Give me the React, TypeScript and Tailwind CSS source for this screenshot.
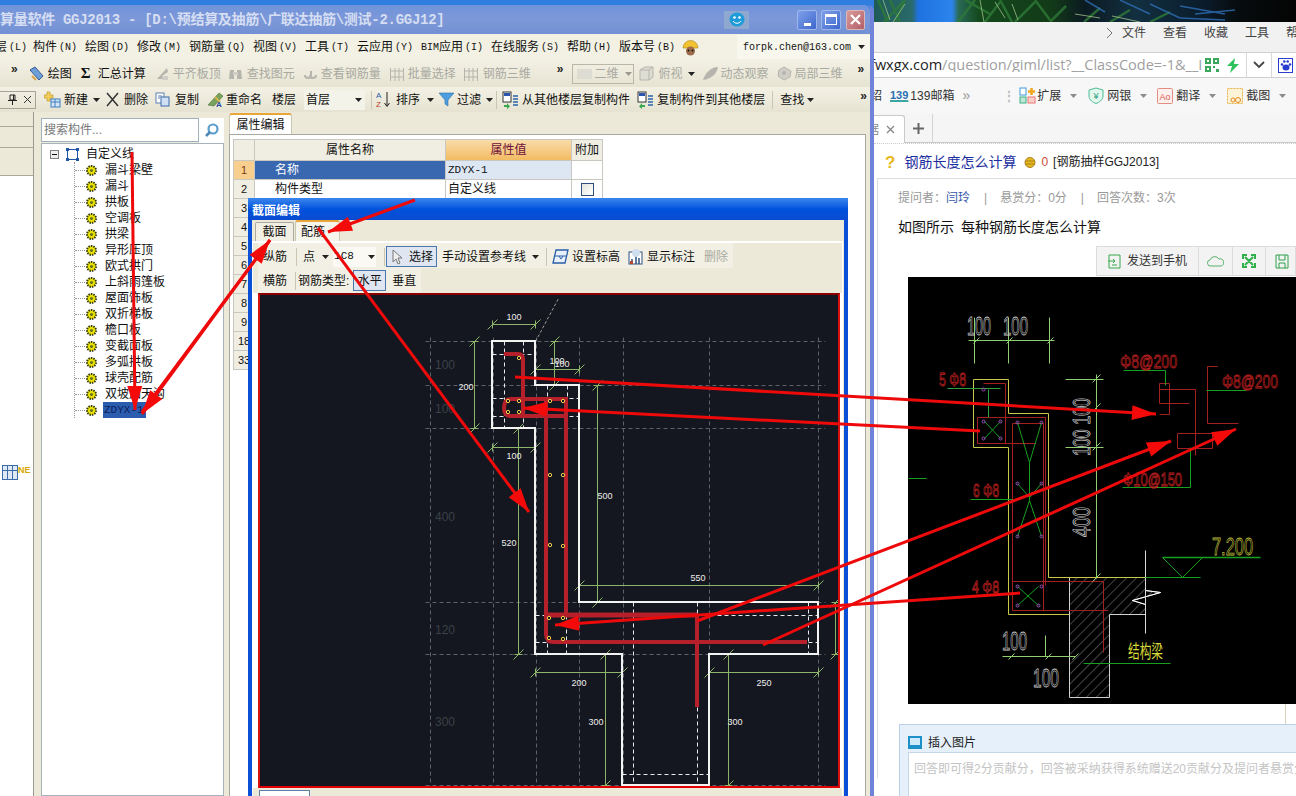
import React from "react";

const MONO = "font-['Liberation_Mono','Noto_Sans_CJK_SC',monospace]";

function Caret({ className = "" }: { className?: string }) {
  return (
    <svg width="7" height="4" viewBox="0 0 7 4" className={"shrink-0 " + className}>
      <path d="M0 0h7L3.5 4z" fill="#222" />
    </svg>
  );
}

function More({ className = "" }: { className?: string }) {
  return <span className={"shrink-0 text-[12px] font-bold leading-none text-[#222] " + className}>»</span>;
}

function Sep({ className = "" }: { className?: string }) {
  return <span className={"h-[18px] w-px shrink-0 bg-[#c9c6b4] " + className} />;
}

function Ic({ k }: { k: string }) {
  const grey = "#b5b5ad";
  switch (k) {
    case "draw":
      return (
        <svg width="17" height="17" viewBox="0 0 17 17">
          <path d="M2 5l5-3 8 9-4 4z" fill="#6f9fd8" stroke="#34598f" />
          <path d="M4 11l4 4" stroke="#d9a441" strokeWidth="2" />
        </svg>
      );
    case "sigma":
      return <span className="w-[9px] font-['Liberation_Serif',serif] text-[15px] font-bold leading-none text-[#111]">Σ</span>;
    case "g1":
      return (
        <svg width="15" height="15" viewBox="0 0 15 15">
          <path d="M2 13L12 2l1 4-6 4v3z" fill={grey} />
          <rect x="7" y="10" width="6" height="4" fill="#cfcfc8" />
        </svg>
      );
    case "g2":
      return (
        <svg width="15" height="15" viewBox="0 0 15 15">
          <path d="M2 4h4v9H1zM9 4h4l1 9H9z" fill={grey} />
          <rect x="5" y="6" width="5" height="3" fill="#cfcfc8" />
        </svg>
      );
    case "g3":
      return (
        <svg width="15" height="15" viewBox="0 0 15 15">
          <path d="M2 9a3 3 0 106 0V5M13 9a3 3 0 11-6 0" fill="none" stroke={grey} strokeWidth="2" />
        </svg>
      );
    case "g4":
      return (
        <svg width="16" height="16" viewBox="0 0 16 16" fill="none" stroke={grey}>
          <path d="M1.5 2v13M6 2v13M10 2v13M14.5 2v13M1 5h14M1 11h14" />
        </svg>
      );
    case "g5":
      return (
        <svg width="17" height="17" viewBox="0 0 17 17" fill="#ddddd4" stroke={grey}>
          <path d="M2 5l5-3h8v10l-4 3H2z" />
          <path d="M2 5h9v10M11 5l4-3" fill="none" />
        </svg>
      );
    case "g6":
      return (
        <svg width="17" height="17" viewBox="0 0 17 17">
          <path d="M1 15C3 8 9 2 16 2c-1 7-7 12-15 13z" fill={grey} />
        </svg>
      );
    case "g7":
      return (
        <svg width="17" height="17" viewBox="0 0 17 17">
          <path d="M8 2l7 4-1 6-6 3-6-4 1-6z" fill="#cfcfc8" stroke={grey} />
          <circle cx="8" cy="8" r="2" fill={grey} />
        </svg>
      );
    case "new":
      return (
        <svg width="17" height="17" viewBox="0 0 17 17">
          <path d="M3 1h3v3h3v3H6v3H3V7H0V4h3z" fill="#f3cf5a" stroke="#b98e22" strokeWidth=".6" />
          <rect x="7" y="8" width="9" height="8" fill="#d6e5f5" stroke="#3d7fc0" />
          <path d="M7 11h9M11 8v8" stroke="#3d7fc0" />
        </svg>
      );
    case "del":
      return (
        <svg width="15" height="15" viewBox="0 0 15 15">
          <path d="M2 1l11 13M13 1L2 14" stroke="#333" strokeWidth="1.5" />
        </svg>
      );
    case "copy":
      return (
        <svg width="15" height="15" viewBox="0 0 15 15">
          <rect x="1" y="1" width="8" height="10" fill="#fff" stroke="#5a7fb8" />
          <rect x="6" y="5" width="8" height="9" fill="#cfe0f5" stroke="#3d69a8" />
          <path d="M3 4h4M3 6h2" stroke="#5a7fb8" />
        </svg>
      );
    case "rename":
      return (
        <svg width="19" height="17" viewBox="0 0 19 17">
          <path d="M2 14L13 2l4 3L8 15z" fill="#77a35a" stroke="#4b6e39" strokeWidth=".6" />
          <path d="M9 6l5 5" stroke="#d6b24a" strokeWidth="2" />
          <text x="10" y="16" fontSize="8" fontWeight="700" fill="#224f9c" fontFamily="Liberation Sans">A</text>
        </svg>
      );
    case "sort":
      return (
        <svg width="15" height="17" viewBox="0 0 15 17">
          <text x="0" y="7" fontSize="8" fill="#2d5ea8" fontFamily="Liberation Sans">A</text>
          <text x="0" y="16" fontSize="8" fill="#c0392b" fontFamily="Liberation Sans">Z</text>
          <path d="M11 1v14M8.5 12l2.5 3.5 2.5-3.5" stroke="#222" fill="none" />
        </svg>
      );
    case "filter":
      return (
        <svg width="15" height="15" viewBox="0 0 15 15">
          <path d="M0 1h15L9 8v6l-3-2V8z" fill="#4d9ee0" stroke="#2c6ea8" strokeWidth=".6" />
        </svg>
      );
    case "layerIn":
    case "layerOut":
      return (
        <svg width="17" height="18" viewBox="0 0 17 18">
          <rect x="1" y="1" width="8" height="10" fill="#fff" stroke="#333" />
          <rect x="2" y="2" width="6" height="3" fill="#2a56b0" />
          <path d="M11 5h5M11 8h5M11 11h5M11 14h5" stroke="#5a85b8" strokeWidth="2" />
          <path d={k === "layerIn" ? "M2 14h3v-2l3 3.5L5 18v-2H2z" : "M8 14H5v-2l-3 3.5L5 18v-2h3z"} fill="#3aa94e" />
        </svg>
      );
    case "level":
      return (
        <svg width="17" height="15" viewBox="0 0 17 15">
          <path d="M4 1h12l-3 13H1z" fill="#e8f0fa" stroke="#2a5ea8" strokeWidth="1.3" />
          <path d="M3 7h11M7 7l2 3 2-3" stroke="#2a5ea8" fill="none" />
        </svg>
      );
    case "mark":
      return (
        <svg width="15" height="16" viewBox="0 0 15 16">
          <rect x="1" y="3" width="13" height="12" fill="#fff" stroke="#2f4f7f" />
          <path d="M4 15V10M8 15V7M11 15V9" stroke="#2f4f7f" strokeWidth="1.5" />
          <circle cx="8" cy="4" r="4" fill="#cfdff0" />
          <rect x="2" y="12" width="3" height="3" fill="#b5482a" />
        </svg>
      );
    default:
      return null;
  }
}

function Tool({ i, t, off, drop, g = "gap-[3px]", className = "" }: { i: string; t: string; off?: boolean; drop?: boolean; g?: string; className?: string }) {
  return (
    <div className={"flex shrink-0 items-center whitespace-nowrap " + g + " " + (off ? "text-[#a9a9a1] " : "text-[#111] ") + className}>
      <Ic k={i} />
      <span>{t}</span>
      {drop && <Caret className="ml-[2px]" />}
    </div>
  );
}

function Title() {
  return (
    <div className="relative flex h-[29px] shrink-0 items-center rounded-tr-[6px] bg-gradient-to-b from-[#6f93dc] via-[#7d98d8] to-[#7290d4]">
      <span className={MONO + " mt-[2px] whitespace-nowrap text-[14px] font-bold tracking-[-0.28px] text-[#d5def2]"}>
        算量软件 GGJ2013 - [D:\预结算及抽筋\广联达抽筋\测试-2.GGJ12]
      </span>
      <div className="ml-auto mr-[5px] flex items-center">
        <div className="mr-[48px] flex h-[18px] w-[25px] items-center justify-center bg-[#8fa8cf]">
          <svg width="16" height="15" viewBox="0 0 16 15">
            <ellipse cx="8" cy="7.5" rx="7.5" ry="7" fill="#1e9bd8" />
            <circle cx="5.5" cy="5.5" r="1.3" fill="#fff" />
            <circle cx="10.5" cy="5.5" r="1.3" fill="#fff" />
            <path d="M4 9c2 3 6 3 8 0" stroke="#fff" fill="none" />
          </svg>
        </div>
        <div className="flex h-[20px] w-[20px] items-end justify-center rounded-[2px] border border-[#9db6ee] bg-gradient-to-br from-[#7fa1ea] to-[#3f66cc] pb-[3px]">
          <span className="h-[3px] w-[7px] bg-white" />
        </div>
        <div className="ml-[4px] flex h-[20px] w-[20px] items-center justify-center rounded-[2px] border border-[#9db6ee] bg-gradient-to-br from-[#7fa1ea] to-[#3f66cc]">
          <span className="h-[11px] w-[12px] border border-t-[3px] border-white" />
        </div>
        <div className="ml-[5px] flex h-[20px] w-[19px] items-center justify-center rounded-[2px] border border-[#d9b6bc] bg-gradient-to-br from-[#d99b98] to-[#b25e6a]">
          <svg width="11" height="11" viewBox="0 0 11 11">
            <path d="M1 1l9 9M10 1l-9 9" stroke="#fff" strokeWidth="2.2" />
          </svg>
        </div>
      </div>
    </div>
  );
}

function MenuBar() {
  const items: [string, string, string, string][] = [
    ["", "层", "(L)", "-ml-[5px] w-[38px]"],
    ["", "构件", "(N)", "w-[52px]"],
    ["", "绘图", "(D)", "w-[52px]"],
    ["", "修改", "(M)", "w-[52px]"],
    ["", "钢筋量", "(Q)", "w-[64px]"],
    ["", "视图", "(V)", "w-[52px]"],
    ["", "工具", "(T)", "w-[52px]"],
    ["", "云应用", "(Y)", "w-[64px]"],
    ["BIM", "应用", "(I)", "w-[70px]"],
    ["", "在线服务", "(S)", "w-[76px]"],
    ["", "帮助", "(H)", "w-[52px]"],
    ["", "版本号", "(B)", "w-[63px]"],
  ];
  return (
    <div className="flex h-[26px] shrink-0 items-center bg-[#f3f1e4] text-[12px] text-[#111]">
      {items.map(([p, t, l, c]) => (
        <span key={t} className={"flex shrink-0 items-center whitespace-nowrap " + c}>
          {p && <span className={MONO + " text-[10px]"}>{p}</span>}
          <span>{t}</span>
          <span className={MONO + " ml-[2px] text-[10px]"}>{l}</span>
        </span>
      ))}
      <svg width="17" height="17" viewBox="0 0 17 17" className="shrink-0">
        <path d="M1 9a7.5 7.5 0 0115 0z" fill="#f2c230" stroke="#a98416" strokeWidth=".6" />
        <circle cx="8.5" cy="12" r="4.5" fill="#9c6b4a" />
        <circle cx="6.5" cy="11.5" r=".9" fill="#111" />
        <circle cx="10.5" cy="11.5" r=".9" fill="#111" />
      </svg>
      <div className={MONO + " ml-[38px] flex h-[24px] w-[133px] shrink-0 items-center justify-between bg-[#f8f7ee] pl-[6px] pr-[5px] text-[10px] text-[#111]"}>
        <span className="whitespace-nowrap">forpk.chen@163.com</span>
        <Caret />
      </div>
    </div>
  );
}

function Toolbar1() {
  return (
    <div className="flex h-[27px] shrink-0 items-center bg-gradient-to-b from-[#f3f1e4] to-[#e6e3d2] pl-[11px] text-[12px]">
      <More className="-mt-[9px]" />
      <Tool i="draw" t="绘图" className="ml-[10px]" />
      <Tool i="sigma" t="汇总计算" g="gap-[8px]" className="ml-[9px]" />
      <Tool i="g1" t="平齐板顶" off className="ml-[9px]" />
      <Tool i="g2" t="查找图元" off g="gap-[4px]" className="ml-[7px]" />
      <Tool i="g3" t="查看钢筋量" off className="ml-[8px]" />
      <Tool i="g4" t="批量选择" off className="ml-[8px]" />
      <Tool i="g4" t="钢筋三维" off g="gap-[4px]" className="ml-[7px]" />
      <More className="-mt-[9px] ml-[26px]" />
      <div className="ml-[9px] flex h-[20px] w-[62px] shrink-0 items-center gap-[2px] border border-[#b9b7a8] pl-[4px] text-[#a9a9a1]">
        <span className="h-[10px] w-[15px] bg-[#dcdcd2]" />
        <span>二维</span>
        <Caret className="ml-[4px] opacity-40" />
      </div>
      <Tool i="g5" t="俯视" off drop className="ml-[4px]" />
      <Tool i="g6" t="动态观察" off g="gap-[2px]" className="ml-[7px]" />
      <Tool i="g7" t="局部三维" off g="gap-[2px]" className="ml-[7px]" />
      <More className="-mt-[9px] ml-[15px]" />
    </div>
  );
}

function Toolbar2() {
  return (
    <div className="flex h-[25px] shrink-0 items-center bg-gradient-to-b from-[#f3f1e4] to-[#e6e3d2] text-[12px]">
      <div className="flex h-[18px] w-[36px] shrink-0 items-center justify-end gap-[6px] border border-l-0 border-[#a5a398] pr-[3px]">
        <svg width="9" height="11" viewBox="0 0 9 11" fill="none" stroke="#222">
          <path d="M2 1h5v5H2zM0 6.500h9M4.500 6.500V11M5.500 1v5" />
        </svg>
        <svg width="9" height="9" viewBox="0 0 9 9" stroke="#333">
          <path d="M1 1l7 7M8 1L1 8" />
        </svg>
      </div>
      <Tool i="new" t="新建" drop className="ml-[8px]" />
      <Tool i="del" t="删除" g="gap-[4px]" className="ml-[5px]" />
      <Tool i="copy" t="复制" g="gap-[5px]" className="ml-[7px]" />
      <Tool i="rename" t="重命名" g="gap-[1px]" className="ml-[7px]" />
      <span className="ml-[10px] shrink-0 text-[#111]">楼层</span>
      <div className="ml-[8px] flex h-[20px] w-[61px] shrink-0 items-center justify-between bg-[#f4f3ea] pl-[2px] pr-[3px] text-[#111]">
        <span>首层</span>
        <Caret />
      </div>
      <Sep className="ml-[6px]" />
      <Tool i="sort" t="排序" drop g="gap-[5px]" className="ml-[4px]" />
      <Tool i="filter" t="过滤" drop className="ml-[5px]" />
      <Sep className="ml-[3px]" />
      <Tool i="layerIn" t="从其他楼层复制构件" className="ml-[5px]" />
      <Tool i="layerOut" t="复制构件到其他楼层" className="ml-[7px]" />
      <Sep className="ml-[7px]" />
      <span className="ml-[7px] shrink-0 text-[#111]">查找</span>
      <Caret className="ml-[3px]" />
      <More className="-mt-[7px] ml-[46px]" />
    </div>
  );
}

function Gear() {
  return (
    <svg width="13" height="13" viewBox="0 0 13 13" className="shrink-0">
      <circle cx="6.500" cy="6.500" r="4.500" fill="#e8e400" stroke="#3a3a10" strokeDasharray="1.500 1" strokeWidth="2" />
      <circle cx="6.500" cy="6.500" r="1.500" fill="#6b6a20" />
    </svg>
  );
}

const TREE = ["漏斗梁壁", "漏斗", "拱板", "空调板", "拱梁", "异形压顶", "欧式拱门", "上斜雨篷板", "屋面饰板", "双折梯板", "檐口板", "变截面板", "多弧拱板", "球壳配筋", "双坡加天沟"];

function TreePanel() {
  return (
    <div className="flex w-[183px] shrink-0 flex-col">
      <div className="mt-[6px] flex h-[25px] shrink-0">
        <div className="flex h-[24px] w-[158px] items-center border border-[#9fb1bd] bg-white pl-[2px] text-[12px] text-[#777]">搜索构件...</div>
        <div className="flex flex-1 items-center justify-center bg-white">
          <svg width="15" height="15" viewBox="0 0 15 15" fill="none">
            <circle cx="9" cy="6" r="4.500" stroke="#5a9ecf" strokeWidth="2.200" />
            <path d="M6 9l-4 4" stroke="#4d86b3" strokeWidth="2.500" />
          </svg>
        </div>
      </div>
      <div className="relative flex-1 border border-[#a5b4bc] bg-white pt-[2px] text-[12px] leading-[16px] text-[#111]">
        <div className="flex h-[16px] items-center">
          <span className="ml-[8px] flex h-[9px] w-[9px] items-center justify-center border border-[#808080] bg-[#eee]">
            <span className="h-px w-[5px] bg-[#111]" />
          </span>
          <svg width="13" height="13" viewBox="0 0 13 13" className="ml-[7px] shrink-0">
            <rect x="1.500" y="1.500" width="10" height="10" fill="none" stroke="#1f57a8" />
            <path d="M0 0h3v3H0zM10 0h3v3h-3zM0 10h3v3H0zM10 10h3v3h-3z" fill="#1f57a8" />
          </svg>
          <span className="ml-[7px]">自定义线</span>
        </div>
        <div className="ml-[32px] border-l border-dotted border-[#999]">
          {TREE.map((t) => (
            <div key={t} className="flex h-[16px] items-center">
              <span className="w-[10px] border-t border-dotted border-[#999]" />
              <Gear />
              <span className="ml-[7px] whitespace-nowrap">{t}</span>
            </div>
          ))}
          <div className="flex h-[16px] items-center">
            <span className="w-[10px] border-t border-dotted border-[#999]" />
            <Gear />
            <span className={MONO + " ml-[5px] w-[43px] whitespace-nowrap bg-[#2a5cb0] pl-px text-[11px] leading-[16px] text-[#0a1c5a]"}>ZDYX-1</span>
          </div>
        </div>
      </div>
    </div>
  );
}

const ROWS = ["1", "2", "3", "4", "5", "6", "7", "8", "9", "18", "33"];

function AttrPanel() {
  return (
    <div className="ml-[5px] flex w-[637px] shrink-0 flex-col">
      <div className="mt-px flex h-[21px] shrink-0">
        <div className="flex w-[63px] items-center justify-center rounded-t-[3px] border-x border-t-2 border-[#c9c6b4] border-t-[#e8a53a] bg-white text-[12px] text-[#111]">属性编辑</div>
      </div>
      <div className="flex-1 border-x border-t border-[#a9a9a0] bg-white pl-[3px] pt-[4px] text-[12px] text-[#111]">
        <div className="flex h-[22px] w-[370px]">
          <div className="w-[22px] border border-[#c8c8c0] bg-[#f0eee2]" />
          <div className="flex w-[191px] items-center justify-center border-y border-r border-[#c8c8c0] bg-[#f0eee2]">属性名称</div>
          <div className="flex w-[126px] items-center justify-center border-y border-r border-[#c8c8c0] bg-gradient-to-b from-[#f9dca8] to-[#f3bb62] text-[#70103a]">属性值</div>
          <div className="flex w-[31px] items-center justify-center border-y border-r border-[#c8c8c0] bg-[#f0eee2]">附加</div>
        </div>
        {ROWS.map((r, i) => (
          <div key={r} className="flex h-[19px] w-[370px]">
            <div className={"flex w-[22px] items-center justify-center border-x border-b border-[#c8c8c0] text-[11px] " + (i === 0 ? "bg-[#f8cf8e] text-[#7a3a10]" : "bg-[#f0eee2]")}>{r}</div>
            <div className={"flex w-[191px] items-center border-b border-r border-[#c8c8c0] pl-[20px] " + (i === 0 ? "bg-[#3a68b0] text-white" : "")}>
              {i === 0 ? "名称" : i === 1 ? "构件类型" : ""}
            </div>
            <div className={"flex w-[126px] items-center border-b border-r border-[#c8c8c0] pl-[2px] " + (i === 0 ? MONO + " bg-[#dde7f3] text-[11px]" : "")}>
              {i === 0 ? "ZDYX-1" : i === 1 ? "自定义线" : ""}
            </div>
            <div className="flex w-[31px] items-center justify-center border-b border-r border-[#c8c8c0]">
              {i === 1 && <span className="h-[13px] w-[13px] border border-[#2f4f7f] bg-gradient-to-br from-[#e6e6de] to-white" />}
            </div>
          </div>
        ))}
      </div>
    </div>
  );
}

function Dim({ x1, y1, x2, y2 }: { x1: number; y1: number; x2: number; y2: number }) {
  const tick = (x: number, y: number) => <path d={`M${x - 5} ${y + 5}L${x + 5} ${y - 5}`} />;
  const h = y1 === y2;
  const ext = (x: number, y: number) => <path d={h ? `M${x} ${y - 4}V${y + 4}` : `M${x - 4} ${y}H${x + 4}`} />;
  return (
    <g stroke="#8db56a" strokeWidth="1" fill="none">
      <path d={`M${x1} ${y1}L${x2} ${y2}`} />
      {tick(x1, y1)}
      {tick(x2, y2)}
      {ext(x1, y1)}
      {ext(x2, y2)}
    </g>
  );
}

function SectionCanvas() {
  const gridH = [341, 385, 428, 602, 654, 785];
  const gridV = [429, 492, 535, 578, 622, 708, 817];
  const whiteDash = [
    "M491 354H534", "M503 341V428", "M522 341V428", "M491 398H578", "M491 416H578",
    "M546 385V398", "M566 385V398", "M534 615H817", "M534 642H817", "M546 615V654",
    "M565 615V654", "M632 602V785", "M696 602V785", "M807 602V654", "M621 774H708",
  ];
  const dots = [
    [518, 358], [507, 401], [518, 401], [507, 412], [518, 412], [549, 401], [562, 401],
    [549, 475], [562, 475], [549, 545], [562, 546], [548, 618], [562, 618], [548, 638], [562, 639],
  ];
  const white: [string, number, number][] = [
    ["100", 513, 320], ["200", 465, 390], ["100", 556, 364], ["100", 561, 367], ["100", 513, 459],
    ["520", 508, 546], ["500", 604, 499], ["550", 697, 581], ["200", 578, 686], ["250", 763, 686],
    ["300", 595, 725], ["300", 734, 725],
  ];
  const ghost: [string, number, number][] = [["100", 444, 369], ["100", 444, 413], ["400", 444, 521], ["120", 444, 634], ["300", 444, 726]];
  return (
    <svg width="578" height="491" viewBox="259 295 578 491" className="block">
      <rect x="257" y="293" width="582" height="495" fill="#14171f" />
      <g transform="translate(.5 .5)">
        <g stroke="#5c6068" strokeWidth="1" strokeDasharray="4 3" fill="none">
          {gridH.map((y) => <path key={y} d={`M424 ${y}H824`} />)}
          {gridV.map((x) => <path key={x} d={`M${x} 337V786`} />)}
          <path d="M534 341L557 298" stroke="#9a9a9a" strokeDasharray="3 2" />
        </g>
        <g stroke="#e8ecf0" strokeWidth="1" strokeDasharray="4 3" fill="none">
          {whiteDash.map((d) => <path key={d} d={d} />)}
        </g>
        <Dim x1={491} y1={324} x2={534} y2={324} />
        <Dim x1={473} y1={341} x2={473} y2={428} />
        <Dim x1={534} y1={369} x2={578} y2={369} />
        <Dim x1={553} y1={341} x2={553} y2={385} />
        <Dim x1={491} y1={447} x2={534} y2={447} />
        <Dim x1={517} y1={428} x2={517} y2={654} />
        <Dim x1={596} y1={385} x2={596} y2={602} />
        <Dim x1={578} y1={585} x2={817} y2={585} />
        <Dim x1={834} y1={602} x2={834} y2={654} />
        <Dim x1={534} y1={672} x2={621} y2={672} />
        <Dim x1={708} y1={672} x2={817} y2={672} />
        <Dim x1={604} y1={654} x2={604} y2={785} />
        <Dim x1={727} y1={654} x2={727} y2={785} />
      </g>
      <path
        d="M491 341H534V385H578V602H817V654H708V785H621V654H534V428H491Z"
        fill="none"
        stroke="#f2f2f2"
        strokeWidth="2"
      />
      <g stroke="#b5202a" strokeWidth="4" fill="none">
        <path d="M503 354H517Q522 354 522 360V414" />
        <path d="M510 399H565V416H510Q503 416 503 408Q503 399 510 399Z" />
        <path d="M545 399V634Q545 642 553 642H806" />
        <path d="M565 399V615" />
        <path d="M545 615H696" strokeWidth="5" />
        <path d="M696 615V707" />
      </g>
      {dots.map(([x, y]) => (
        <circle key={`${x}-${y}`} cx={x} cy={y} r="1.700" fill="#14171f" stroke="#f4d04e" strokeWidth="1" />
      ))}
      {white.map(([t, x, y], i) => (
        <text key={i} x={x} y={y} textAnchor="middle" fontSize="9" fill="#eee" fontFamily="Liberation Sans">{t}</text>
      ))}
      {ghost.map(([t, x, y], i) => (
        <text key={i} x={x} y={y} textAnchor="middle" fontSize="12" fill="#3c4048" fontFamily="Liberation Sans">{t}</text>
      ))}
    </svg>
  );
}

function Dialog() {
  return (
    <div className="absolute left-[248px] top-[198px] flex h-[598px] w-[600px] flex-col border-x-[4px] border-x-[#0a4fd8] bg-[#ece9d8] text-[12px] text-[#111]">
      <div className="-mx-[4px] flex h-[22px] shrink-0 items-center bg-gradient-to-b from-[#3a86ee] via-[#0052dc] to-[#0a4bd0] pl-[4px] pt-[3px] text-[12px] font-bold text-white">截面编辑</div>
      <div className="flex h-[21px] shrink-0 items-end pl-[3px]">
        <div className="flex h-[19px] w-[39px] items-center justify-center rounded-t-[2px] border border-b-0 border-[#a9a9a0] bg-[#f1efe4]">截面</div>
        <div className="ml-px flex h-[21px] w-[45px] items-center rounded-t-[3px] border-x border-t-2 border-[#c9c6b4] border-t-[#e8a53a] bg-[#f6f5ec] pl-[5px]">配筋</div>
      </div>
      <div className="mr-[1px] flex flex-1 flex-col border-x border-t-2 border-white pl-[5px]">
        <div className="flex h-[25px] w-[475px] shrink-0 items-center bg-[#f2f0e4] pl-[5px] pt-[2px]">
          <span className="shrink-0">纵筋</span>
          <Sep className="ml-[9px]" />
          <span className="ml-[6px] shrink-0">点</span>
          <Caret className="ml-[7px]" />
          <div className="ml-[4px] flex h-[20px] w-[43px] shrink-0 items-center justify-between bg-[#faf9f3] pl-px pr-[1px]">
            <span className={MONO + " text-[11px]"}>1C8</span>
            <Caret />
          </div>
          <Sep className="ml-[8px]" />
          <div className="ml-[1px] flex h-[21px] w-[51px] shrink-0 items-center border border-[#4a78ac] bg-[#dfe6f2] pl-[4px]">
            <svg width="13" height="16" viewBox="0 0 13 16" className="shrink-0">
              <path d="M2 1v12l3-3 2 5 2-1-2-5h4z" fill="#eee" stroke="#777" />
            </svg>
            <span className="ml-[5px] shrink-0">选择</span>
          </div>
          <span className="ml-[5px] shrink-0 whitespace-nowrap">手动设置参考线</span>
          <Caret className="ml-[6px]" />
          <Sep className="ml-[7px]" />
          <Tool i="level" t="设置标高" className="ml-[5px]" />
          <Tool i="mark" t="显示标注" g="gap-[4px]" className="ml-[8px]" />
          <span className="ml-[9px] shrink-0 text-[#a9a9a1]">删除</span>
        </div>
        <div className="flex h-[25px] w-[163px] shrink-0 items-center bg-[#f2f0e4] pl-[5px]">
          <span className="shrink-0">横筋</span>
          <Sep className="ml-[8px]" />
          <span className="ml-[2px] shrink-0 whitespace-nowrap">钢筋类型:</span>
          <div className="ml-[4px] flex h-[21px] w-[33px] shrink-0 items-center justify-center border border-[#4a78ac] bg-[#dfe6f2]">水平</div>
          <span className="ml-[6px] shrink-0">垂直</span>
        </div>
        <div className="-ml-[5px] shrink-0 bg-white pl-[5px]">
          <div className="w-[582px] border-2 border-t-[#8a0000] border-x-[#d81010] border-b-[#e00000]">
            <SectionCanvas />
          </div>
        </div>
        <div className="mt-[2px] flex h-[8px] items-start">
          <div className="ml-[1px] h-[6px] w-[51px] border border-b-0 border-[#5f7fa8] bg-white" />
        </div>
      </div>
    </div>
  );
}

function LeftWindow() {
  return (
    <div className="mt-[5px] flex h-[791px] w-[874px] shrink-0 flex-col rounded-tr-[6px] border-r-[4px] border-[#6f83d8]">
      <Title />
      <MenuBar />
      <Toolbar1 />
      <Toolbar2 />
      <div className="flex min-h-0 flex-1 bg-[#ece9d8]">
        <div className="flex w-[34px] shrink-0 flex-col border-r border-[#9a9a92]">
          <div className="h-[15px] border-b border-[#aaa89a]" />
          <div className="h-[21px] border-b border-[#aaa89a]" />
          <div className="h-[28px] border-b border-[#aaa89a]" />
          <div className="flex-1 bg-white pl-[2px] pt-[289px]">
            <div className="flex items-start">
              <svg width="16" height="15" viewBox="0 0 16 15" className="shrink-0">
                <rect x=".5" y=".5" width="15" height="14" fill="#dfe8f5" stroke="#3a6ca8" />
                <path d="M5.500 1v13M10.500 1v13M1 5.500h14" stroke="#3a6ca8" />
              </svg>
              <span className="font-['Liberation_Sans',sans-serif] text-[9px] font-bold leading-[10px] text-[#d8a800]">NE</span>
            </div>
          </div>
        </div>
        <div className="w-[7px] shrink-0" />
        <TreePanel />
        <AttrPanel />
      </div>
    </div>
  );
}

function Wallpaper() {
  const green = [
    "M878 0L888 22", "M884 22L905 0", "M890 0L900 22", "M905 0L895 22", "M958 22L975 0", "M965 0L990 14", "M985 22L1000 2",
    "M1000 0L1012 22", "M1015 22L1035 2", "M1035 0L1050 20", "M1050 22L1066 6", "M1084 22L1100 8", "M1110 22L1130 10", "M1150 22L1170 12",
  ];
  const light = ["M883 0L890 20", "M905 4L893 22", "M980 0L984 22", "M995 2L1005 18", "M1012 4L1018 20", "M1075 14L1100 18", "M1112 16L1140 22"];
  const blue = ["M1085 0L1105 12", "M1120 0L1150 14", "M1150 4L1180 18", "M1180 6L1225 14", "M1195 14L1235 10", "M1180 18L1225 20"];
  return (
    <svg width="422" height="22" viewBox="874 0 422 22" className="block shrink-0">
      <defs>
        <linearGradient id="wall" x1="0" x2="1" y1="0" y2="0">
          <stop offset="0" stopColor="#1f5a58" />
          <stop offset=".09" stopColor="#2a6a6a" />
          <stop offset=".105" stopColor="#1f72e0" />
          <stop offset=".185" stopColor="#2c84ec" />
          <stop offset=".2" stopColor="#2a6a58" />
          <stop offset=".25" stopColor="#14481c" />
          <stop offset=".42" stopColor="#123a18" />
          <stop offset=".5" stopColor="#0c1a22" />
          <stop offset=".62" stopColor="#123040" />
          <stop offset=".78" stopColor="#0a1c2c" />
          <stop offset=".86" stopColor="#070c0e" />
          <stop offset="1" stopColor="#040404" />
        </linearGradient>
      </defs>
      <rect x="874" y="0" width="422" height="22" fill="url(#wall)" />
      <g stroke="#2f7a38" strokeWidth="2.500" fill="none" opacity=".8">
        {green.map((d) => <path key={d} d={d} />)}
      </g>
      <g stroke="#a8c890" strokeWidth="1" fill="none" opacity=".75">
        {light.map((d) => <path key={d} d={d} />)}
      </g>
      <g stroke="#2f6fb8" strokeWidth="1.500" fill="none" opacity=".8">
        {blue.map((d) => <path key={d} d={d} />)}
      </g>
    </svg>
  );
}

function IconSmall({ k }: { k: string }) {
  if (k === "ext")
    return (
      <svg width="17" height="17" viewBox="0 0 17 17" className="shrink-0">
        <rect x="1" y="1" width="6" height="7" fill="#fff" stroke="#3d9ade" />
        <rect x="1" y="10" width="6" height="6" fill="#bfe8d6" stroke="#3aaf88" />
        <rect x="9" y="10" width="7" height="6" fill="#fbd0c8" stroke="#e77" />
        <path d="M12.500 1v7M9 4.500h7" stroke="#f0a620" strokeWidth="2.500" />
      </svg>
    );
  if (k === "bank")
    return (
      <svg width="16" height="17" viewBox="0 0 16 17" className="shrink-0">
        <path d="M8 1l7 2v6c0 4-4 6.500-7 7.500C5 15.500 1 13 1 9V3z" fill="#e2f7ee" stroke="#4dbd96" />
        <text x="8" y="12" textAnchor="middle" fontSize="9" fill="#2a9d78" fontFamily="Liberation Sans">¥</text>
      </svg>
    );
  if (k === "tr")
    return (
      <svg width="16" height="16" viewBox="0 0 16 16" className="shrink-0">
        <rect x=".5" y=".5" width="15" height="15" rx="1" fill="#fdf0ee" stroke="#e58c80" />
        <text x="8" y="11.500" textAnchor="middle" fontSize="9" fill="#d9604e" fontFamily="Liberation Sans">Ao</text>
      </svg>
    );
  return (
    <svg width="16" height="16" viewBox="0 0 16 16" className="shrink-0">
      <rect x=".5" y=".5" width="15" height="15" fill="#fdf3d7" stroke="#e5b34a" strokeDasharray="2 1" />
      <circle cx="11" cy="12" r="2.500" fill="none" stroke="#e08a1e" />
      <circle cx="6" cy="12" r="2" fill="none" stroke="#e08a1e" />
    </svg>
  );
}

function HatchDrawing() {
  const t = (s: string, x: number, y: number, w: number, fs: number, stroke: string, tr?: string) => (
    <text x={x} y={y} fontSize={fs} fill="none" stroke={stroke} strokeWidth=".8" textLength={w} lengthAdjust="spacingAndGlyphs" fontFamily="Liberation Sans" transform={tr}>{s}</text>
  );
  const yellow = "#c8c84a";
  const green = "#8fcf70";
  const dgreen = "#16a020";
  const red = "#a32020";
  const pur = [[983, 389], [983, 421], [1000, 421], [983, 438], [1000, 438], [1017, 422], [1041, 422], [1017, 483], [1041, 483], [1017, 536], [1041, 536], [1017, 586], [1041, 586], [1017, 605], [1038, 605]];
  return (
    <svg width="388" height="427" viewBox="908 277 388 427" className="block">
      <defs>
        <pattern id="hatch" width="7" height="7" patternUnits="userSpaceOnUse" patternTransform="rotate(-45)">
          <path d="M0 0H7" stroke="#a8a8a8" strokeWidth=".8" />
        </pattern>
      </defs>
      <rect x="908" y="277" width="388" height="427" fill="#000" />
      <g transform="translate(.5 .5)">
        <path d="M1069 577H1145V590L1160 592L1132 600L1145 604V614H1109V697H1069Z" fill="url(#hatch)" stroke="#d0d0d0" />
        <path d="M1145 590L1160 592L1132 600L1145 604" stroke="#fff" fill="none" />
        <path d="M1145 550V633" stroke="#d8d8d8" />
        <g stroke={yellow} fill="none">
          <path d="M973 379H1008V413H1048V577H1145" />
          <path d="M973 379V447H1008V614H1069" />
        </g>
        <g stroke={red} fill="none">
          <path d="M983 383H1005V443M977 417H1045V585M977 417V443H1035M1012 423H1043V610M1012 423V610H1108M1012 581H1103V652" />
          <path d="M1159 383H1169V414H1159M1159 383V403H1189M1159 389H1195V455M1177 433H1212V448H1177ZM1207 366H1217M1207 366V423H1238" />
        </g>
        <g stroke={dgreen} fill="none">
          <path d="M988 389V417M947 388H1000" stroke="#2f9f3f" />
          <path d="M984 421L1000 438M1000 421L984 438" />
          <path d="M1017 422L1029 462L1041 422M1029 462V500M1017 483L1029 497L1041 483M1029 500L1017 536M1029 500L1041 536" />
          <path d="M1017 586L1038 605M1038 586L1017 605" />
          <path d="M1123 370H1165V385" />
          <path d="M1206 390H1246" />
          <path d="M1122 487H1190V447" />
          <path d="M970 499H1012" />
          <path d="M908 478H926" />
          <path d="M1162 557H1260" strokeWidth="1.500" />
          <path d="M1162 557L1182 577L1202 557" />
          <path d="M1083 663H1170" />
          <path d="M1145 577H1200" />
        </g>
        <g stroke={green} fill="none">
          <path d="M974 317V363M1008 317V363M1049 317V363M968 340H1054M973 343l6-6M1006 343l6-6M1047 343l6-6" />
          <path d="M1096 374V578M1065 379H1103M1065 447H1103M1092 382l8-8M1092 411l8-8M1092 450l8-8M1092 581l8-8" />
          <path d="M1002 656H1075M1008 659l6-6M1045 659l6-6M1072 659l6-6M1045 635V656" />
        </g>
        <g fill="none" stroke="#a04cc0">
          {pur.map(([x, y]) => <circle key={`${x}-${y}`} cx={x} cy={y} r="1.500" />)}
        </g>
      </g>
      {t("100", 967, 335, 24, 26, "#c8c8c8")}
      {t("100", 1003, 335, 25, 26, "#c8c8c8")}
      {t("100 100", 0, 0, 58, 24, "#c8c8c8", "translate(1090 456) rotate(-90)")}
      {t("400", 0, 0, 30, 24, "#c8c8c8", "translate(1090 537) rotate(-90)")}
      {t("100", 1002, 650, 25, 26, "#c8c8c8")}
      {t("100", 1033, 687, 26, 26, "#c8c8c8")}
      {t("Φ8@200", 1120, 368, 57, 19, "#c02020")}
      {t("5 Φ8", 939, 386, 27, 18, "#c02020")}
      {t("Φ8@200", 1222, 388, 56, 19, "#c02020")}
      {t("Φ10@150", 1123, 486, 59, 18, "#c02020")}
      {t("6 Φ8", 973, 497, 26, 18, "#c02020")}
      {t("4 Φ8", 972, 593, 27, 17, "#c02020")}
      {t("7.200", 1212, 555, 41, 23, "#b8b83a")}
      <text x="1128" y="658" fontSize="18" fill="#d8d83a" textLength="35" lengthAdjust="spacingAndGlyphs" fontFamily="Noto Sans CJK SC">结构梁</text>
    </svg>
  );
}

function Browser() {
  return (
    <div className="flex min-w-0 flex-1 flex-col overflow-hidden bg-white">
      <Wallpaper />
      <div className="flex h-[30px] shrink-0 items-start bg-[#f1f1f1] pl-[232px] pt-[3px] text-[12px] leading-[16px] text-[#444]">
        <svg width="8" height="12" viewBox="0 0 8 12" fill="none" stroke="#777" className="mt-[2px] shrink-0">
          <path d="M1 1l5 5-5 5" />
        </svg>
        <span className="ml-[8px] shrink-0">文件</span>
        <span className="ml-[17px] shrink-0">查看</span>
        <span className="ml-[17px] shrink-0">收藏</span>
        <span className="ml-[17px] shrink-0">工具</span>
        <span className="ml-[17px] shrink-0">帮助</span>
      </div>
      <div className="flex h-[26px] shrink-0 items-center border-y border-[#cfcfcf] bg-white">
        <div className="-ml-[4px] flex w-[335px] shrink-0 items-center overflow-hidden whitespace-nowrap font-['Open_Sans',sans-serif] text-[14.5px] leading-none">
          <span className="text-[#222]">fwxgx.com</span>
          <span className="text-[#a0a0a0]">/question/giml/list?__ClassCode=-1&amp;__I</span>
        </div>
        <svg width="14" height="14" viewBox="0 0 14 14" className="shrink-0" fill="#3aa85a">
          <path d="M0 0h6v6H0zM8 0h6v6H8zM0 8h6v6H0zM8 8h2v2H8zM11 11h3v3h-3zM2 2v2h2V2zM10 2v2h2V2zM2 10v2h2v-2z" fillRule="evenodd" />
        </svg>
        <svg width="12" height="15" viewBox="0 0 12 15" className="ml-[8px] shrink-0">
          <path d="M8 0L0 8h5l-2 7 9-9H7z" fill="#2fc25b" />
        </svg>
        <span className="ml-[7px] h-full w-px shrink-0 bg-[#d8d8d8]" />
        <svg width="12" height="8" viewBox="0 0 12 8" fill="none" stroke="#444" strokeWidth="1.800" className="ml-[6px] shrink-0">
          <path d="M1 1l5 5 5-5" />
        </svg>
        <span className="ml-[6px] h-full w-px shrink-0 bg-[#d8d8d8]" />
        <div className="ml-[6px] flex h-[15px] w-[15px] shrink-0 items-center justify-center border border-[#2a3bd0] bg-white">
          <svg width="12" height="12" viewBox="0 0 12 12" fill="#2a3bd0">
            <ellipse cx="6" cy="8.500" rx="3.500" ry="3" />
            <circle cx="2" cy="5.500" r="1.300" />
            <circle cx="10" cy="5.500" r="1.300" />
            <circle cx="4.300" cy="2.500" r="1.300" />
            <circle cx="7.700" cy="2.500" r="1.300" />
          </svg>
        </div>
      </div>
      <div className="flex h-[35px] shrink-0 items-center bg-[#f7f7f7] text-[12px] text-[#333]">
        <span className="-ml-[4px] w-[20px] shrink-0">绍</span>
        <span className="shrink-0 rounded-[1px] text-[11px] font-bold text-[#2a6fb0] underline decoration-[#3aa8a0] decoration-2">139</span>
        <span className="ml-[2px] shrink-0">139邮箱</span>
        <span className="ml-[8px] shrink-0 text-[14px] text-[#999]">»</span>
        <span className="ml-[33px] shrink-0 text-[12px] font-bold leading-none text-[#bbb]">⋮</span>
        <div className="ml-[4px] flex shrink-0 items-center gap-[1px]"><IconSmall k="ext" /><span>扩展</span></div>
        <Caret className="ml-[9px] opacity-50" />
        <div className="ml-[11px] flex shrink-0 items-center gap-[3px]"><IconSmall k="bank" /><span>网银</span></div>
        <Caret className="ml-[9px] opacity-50" />
        <div className="ml-[10px] flex shrink-0 items-center gap-[3px]"><IconSmall k="tr" /><span>翻译</span></div>
        <Caret className="ml-[9px] opacity-50" />
        <div className="ml-[11px] flex shrink-0 items-center gap-[3px]"><IconSmall k="cut" /><span>截图</span></div>
        <Caret className="ml-[9px] opacity-50" />
      </div>
      <div className="flex h-[30px] shrink-0 items-end border-b border-[#c9c9c9] bg-[#f5f5f5]">
        <div className="-mb-px flex h-[28px] w-[31px] shrink-0 items-center justify-between overflow-hidden rounded-tr-[3px] border border-l-0 border-b-0 border-[#c9c9c9] bg-white pr-[9px] text-[12px] text-[#888]">
          <span className="-ml-[7px]">据</span>
          <svg width="9" height="9" viewBox="0 0 9 9" stroke="#888" strokeWidth="1.300" className="shrink-0">
            <path d="M1 1l7 7M8 1L1 8" />
          </svg>
        </div>
        <div className="flex h-[28px] w-[28px] shrink-0 items-center justify-center border-r border-[#d4d4d4]">
          <svg width="11" height="11" viewBox="0 0 11 11" stroke="#666" strokeWidth="2">
            <path d="M5.500 0v11M0 5.500h11" />
          </svg>
        </div>
      </div>
      <div className="flex-1 border-t border-dotted border-[#ccc] text-[12px]">
        <div className="flex h-[34px] items-center pl-[11px] pt-[2px]">
          <span className="font-['Liberation_Sans',sans-serif] text-[17px] font-bold leading-none text-[#e8b820]">?</span>
          <span className="ml-[9px] text-[14px] text-[#1a2ea0]">钢筋长度怎么计算</span>
          <svg width="12" height="11" viewBox="0 0 12 11" className="ml-[8px] shrink-0">
            <ellipse cx="6" cy="5.500" rx="5" ry="5" fill="#e8b820" stroke="#a8801a" />
            <path d="M1 4h10M1 7h10" stroke="#a8801a" />
          </svg>
          <span className="ml-[5px] text-[#c94c3c]">0</span>
          <span className="ml-[5px] text-[#222]">[钢筋抽样GGJ2013]</span>
        </div>
        <div className="ml-[3px] h-[600px] border-l border-t border-[#ddd]">
          <div className="flex h-[36px] items-center pl-[20px] pt-[2px] text-[#999]">
            <span>提问者：</span>
            <span className="text-[#3355aa]">闫玲</span>
            <span className="ml-[14px]">|</span>
            <span className="ml-[13px]">悬赏分：0分</span>
            <span className="ml-[14px]">|</span>
            <span className="ml-[13px]">回答次数：3次</span>
          </div>
          <div className="flex h-[24px] items-center gap-[7px] pl-[20px] text-[14px] text-[#111]">
            <span>如图所示</span>
            <span>每种钢筋长度怎么计算</span>
          </div>
          <div className="ml-[218px] mt-[7px] flex h-[30px] items-center border border-[#dcdcdc] bg-[#f3f3f3] text-[#333]">
            <svg width="15" height="15" viewBox="0 0 15 15" fill="none" stroke="#3aa84a" className="ml-[10px] shrink-0">
              <path d="M2 1h11v13H2zM1 7h7M6 5l2 2-2 2M5 11h5" />
            </svg>
            <span className="ml-[5px] w-[71px] shrink-0">发送到手机</span>
            <span className="h-full w-px shrink-0 bg-[#dcdcdc]" />
            <svg width="17" height="12" viewBox="0 0 17 12" fill="none" stroke="#5ab06a" className="ml-[8px] shrink-0">
              <path d="M4 11a3 3 0 01-1-6 5 5 0 019-1 3.500 3.500 0 012 7z" />
            </svg>
            <span className="ml-[8px] h-full w-px shrink-0 bg-[#dcdcdc]" />
            <svg width="14" height="14" viewBox="0 0 14 14" className="ml-[9px] shrink-0" fill="none" stroke="#2fb04a" strokeWidth="2">
              <path d="M3 3l8 8M11 3l-8 8M1 5V1h4M9 1h4v4M13 9v4H9M5 13H1V9" />
            </svg>
            <span className="ml-[9px] h-full w-px shrink-0 bg-[#dcdcdc]" />
            <svg width="14" height="15" viewBox="0 0 14 15" className="ml-[9px] shrink-0" fill="none" stroke="#2fa04a">
              <path d="M1 1h12v13H1zM4 1v5h6V1M4 14V9h6v5" />
            </svg>
            <span className="ml-[9px] h-full w-px shrink-0 bg-[#dcdcdc]" />
          </div>
          <div className="ml-[30px] mt-px w-[388px]">
            <HatchDrawing />
          </div>
          <div className="ml-[407px] h-[20px] w-px bg-[#d9d2b8]" />
          <div className="ml-[21px] border border-r-0 border-[#b9d0e8] bg-[#e6f0fb]">
            <div className="flex h-[27px] items-center pl-[8px] pt-[8px] text-[#222]">
              <svg width="14" height="13" viewBox="0 0 14 13" className="shrink-0">
                <rect width="14" height="13" fill="#1f8fc8" />
                <rect x="2" y="2" width="10" height="7" fill="#cfeafa" />
              </svg>
              <span className="ml-[6px]">插入图片</span>
            </div>
            <div className="ml-[8px] h-[60px] overflow-hidden whitespace-nowrap border border-r-0 border-[#c6d6e6] bg-white pl-[5px] pt-[7px] text-[#c4c4c4]">
              回答即可得2分贡献分，回答被采纳获得系统赠送20贡献分及提问者悬赏分
            </div>
          </div>
        </div>
      </div>
    </div>
  );
}

function Arrows() {
  const lines: [number, number, number, number][] = [
    [132, 152, 135, 410],
    [142, 412, 270, 240],
    [270, 240, 142, 414],
    [415, 200, 328, 232],
    [318, 228, 529, 512],
    [515, 377, 1156, 414],
    [980, 431, 523, 408],
    [1020, 593, 555, 625],
    [697, 621, 1171, 441],
    [763, 645, 1236, 429],
  ];
  const head = (x1: number, y1: number, x2: number, y2: number) => {
    const a = Math.atan2(y2 - y1, x2 - x1);
    const l = 24, w = 7.5;
    const bx = x2 - l * Math.cos(a), by = y2 - l * Math.sin(a);
    const nx = -Math.sin(a) * w, ny = Math.cos(a) * w;
    return `${x2},${y2} ${bx + nx},${by + ny} ${bx - nx},${by - ny}`;
  };
  return (
    <svg width="1296" height="796" viewBox="0 0 1296 796" className="pointer-events-none absolute left-0 top-0">
      {lines.map(([a, b, c, d], i) => (
        <g key={i} fill="#f50a0a">
          <line x1={a} y1={b} x2={c} y2={d} stroke="#ee0a0a" strokeWidth="3" />
          <polygon points={head(a, b, c, d)} />
        </g>
      ))}
    </svg>
  );
}

export default function App() {
  return (
    <div className="relative flex h-[796px] w-[1296px] overflow-hidden bg-[#2f7ee0] font-['Liberation_Sans','Noto_Sans_CJK_SC',sans-serif]">
      <LeftWindow />
      <Browser />
      <Dialog />
      <Arrows />
    </div>
  );
}
